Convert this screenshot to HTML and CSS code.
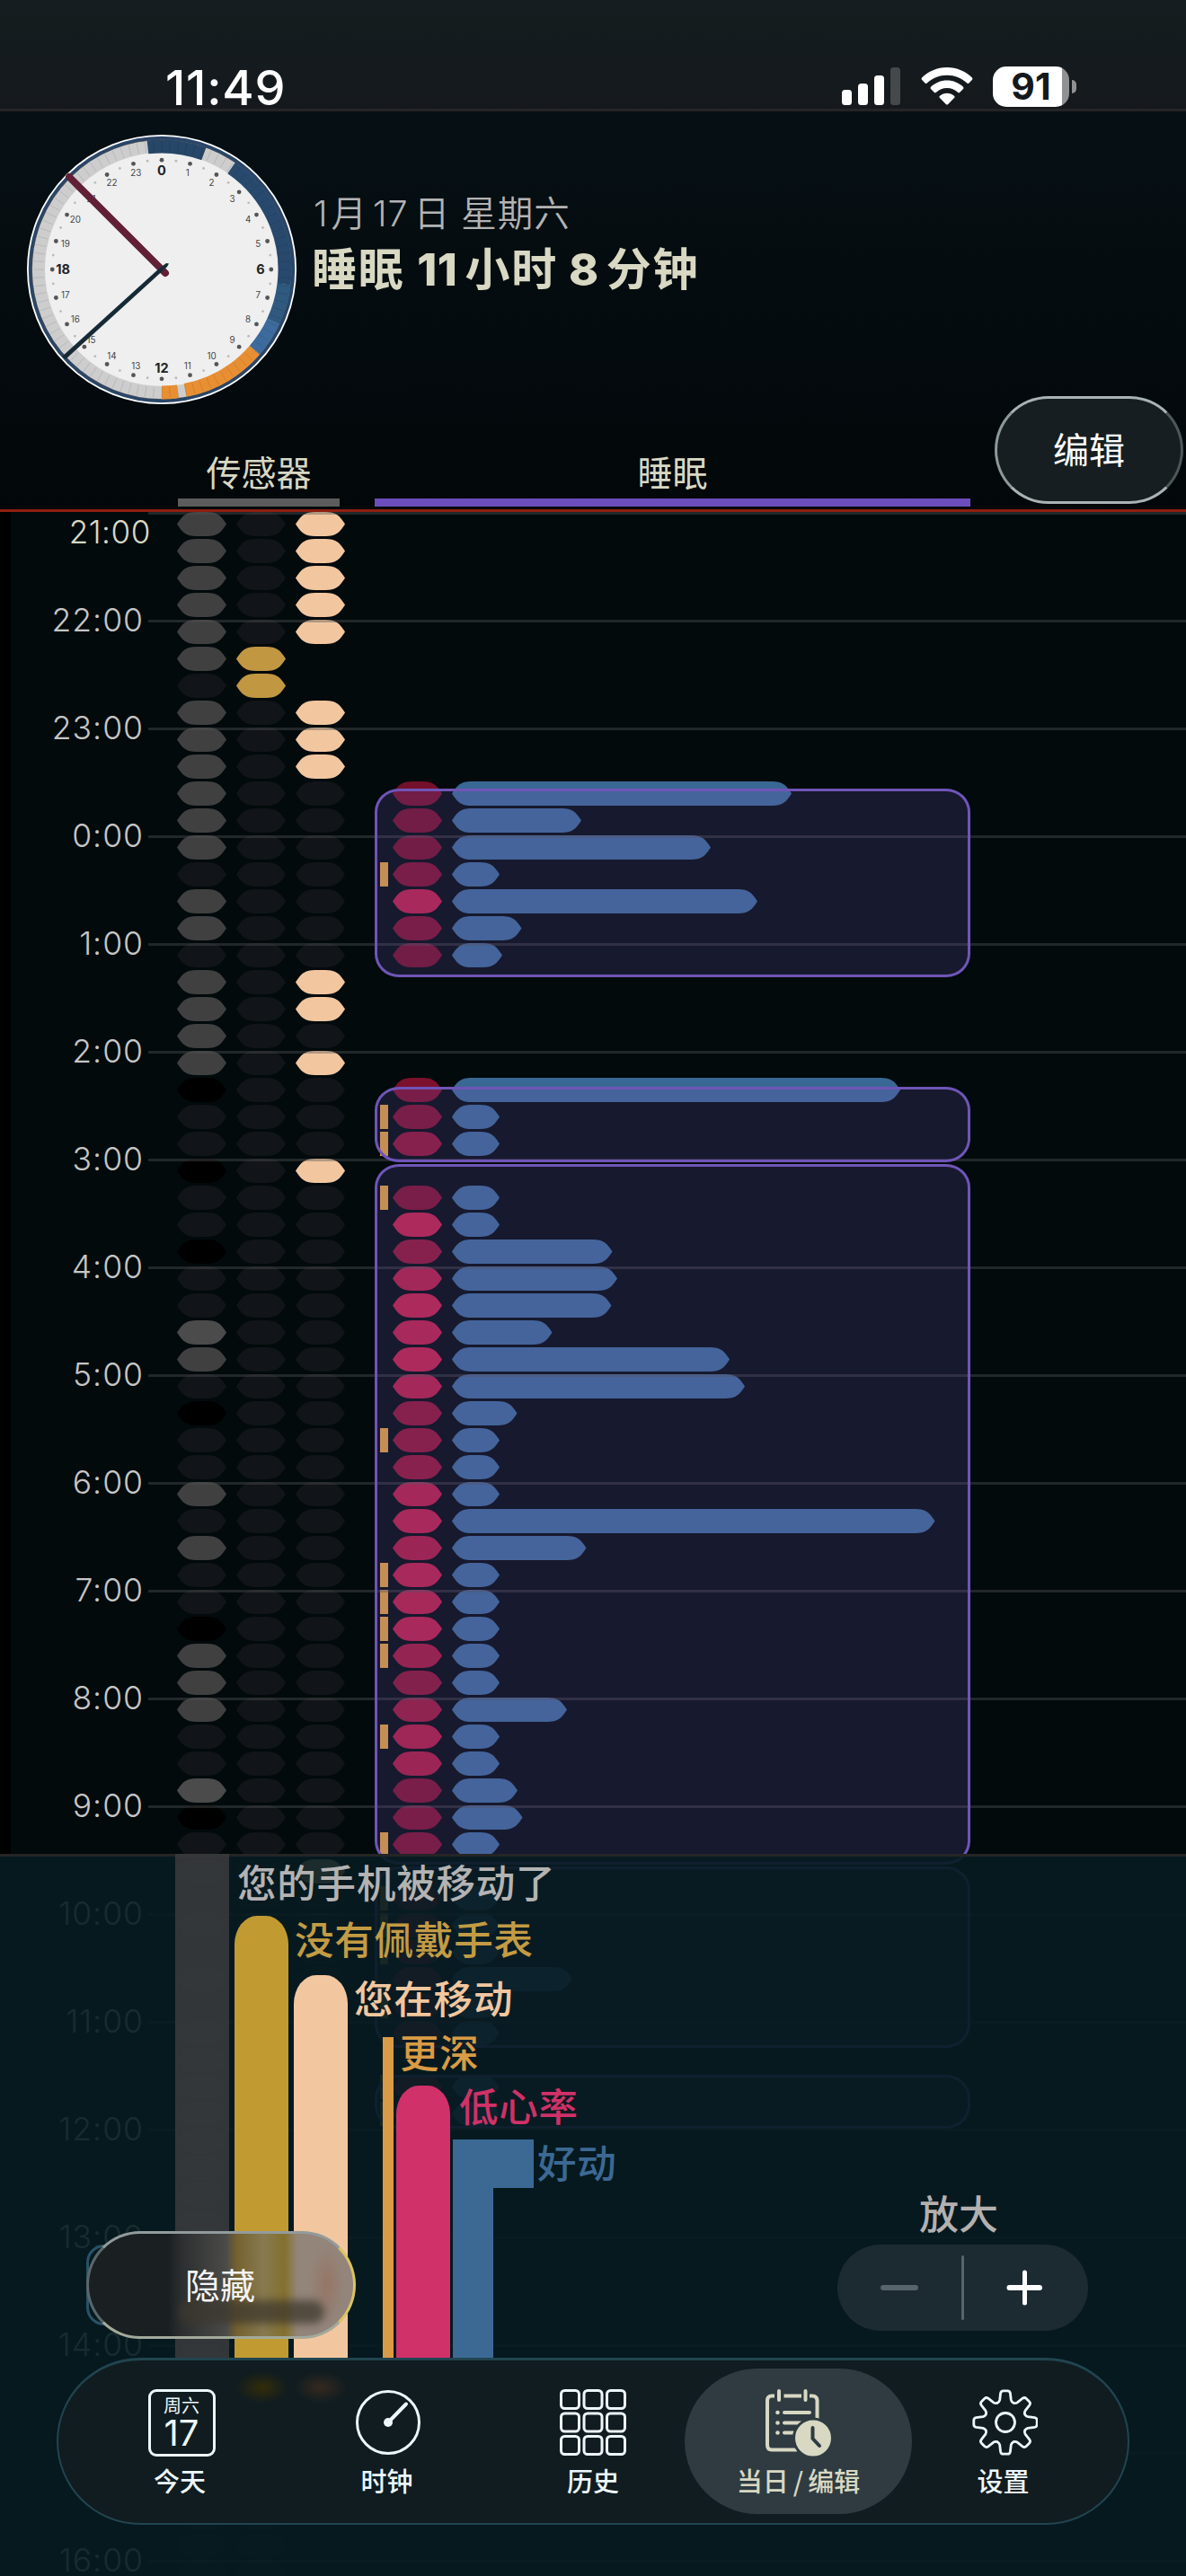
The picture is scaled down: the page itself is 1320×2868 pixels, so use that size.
FILE: index.html
```html
<!DOCTYPE html>
<html lang="zh-CN">
<head>
<meta charset="utf-8">
<title>睡眠</title>
<link rel="stylesheet" href="styles.css">
</head>
<body>
<div class="screen">
  <header class="status">
    <span class="time">11:49</span>
    <div class="status-icons">
      <svg class="signal" width="66" height="42" viewBox="0 0 66 42">
        <g fill="#fff"><rect x="0" y="25" width="11" height="17" rx="3.5"/><rect x="18" y="18" width="11" height="24" rx="3.5"/><rect x="36" y="9" width="11" height="33" rx="3.5"/></g>
        <rect x="54" y="0" width="11" height="42" rx="3.5" fill="#45494b"/>
      </svg>
      <svg class="wifi" width="58" height="42" viewBox="0 0 58 42" fill="#fff">
        <path d="M29 0C40 0 50 4.500 57 11.500Q58 12.700 57 13.800L53.500 17.400Q52.400 18.400 51.300 17.400C45 11.800 37.500 8.700 29 8.700S13 11.800 6.700 17.400Q5.600 18.400 4.500 17.400L1 13.800Q0 12.700 1 11.500C8 4.500 18 0 29 0Z"/>
        <path d="M29 14.500C36 14.500 42 17.200 47 21.700Q48.100 22.900 47 24L43.300 27.700Q42.200 28.700 41 27.700C37.700 24.700 33.700 23 29 23S20.300 24.700 17 27.700Q15.800 28.700 14.700 27.700L11 24Q9.900 22.900 11 21.700C16 17.200 22 14.500 29 14.500Z"/>
        <path d="M29 28.800C32 28.800 34.700 29.900 37 31.700Q38.200 32.900 37 34.100L30.200 41Q29 42.200 27.800 41L21 34.100Q19.800 32.900 21 31.700C23.300 29.900 26 28.800 29 28.800Z"/>
      </svg>
      <div class="battery"><b>91</b></div>
      <i class="battery-nub"></i>
    </div>
  </header>

  <section class="summary">
    <div class="summary-top">
      <svg id="clock" class="clock" width="300" height="300" viewBox="-150 -150 300 300"></svg>
      <div class="heading">
        <p class="date"><span class="d1">1</span>月<span class="d2">17</span>日 星期六</p>
        <h1 class="total">睡眠 <span class="n">11</span><span class="u">小时</span><span class="n">8</span><span class="u">分钟</span></h1>
      </div>
    </div>
    <div class="columns">
      <div class="column sensors">传感器</div>
      <div class="column sleep">睡眠</div>
    </div>
    <button class="glass edit">编辑</button>
  </section>

  <main class="chart" id="chart"></main>

  <section class="legend">
    <div class="pillars">
      <div class="pillar phone"><span>您的手机被移动了</span></div>
      <div class="pillar watch"><span>没有佩戴手表</span></div>
      <div class="pillar moving"><span>您在移动</span></div>
      <div class="pillar deeper"><span>更深</span></div>
      <div class="pillar heart"><span>低心率</span></div>
      <div class="pillar active"><span>好动</span></div>
    </div>
    <div class="zoom">
      <div class="zoom-title">放大</div>
      <div class="stepper">
        <svg width="279" height="96" viewBox="0 0 279 96" stroke-linecap="round" stroke-width="6">
          <path d="M51 48H87" stroke="#57646a"/>
          <path d="M139.500 13.500V82.500" stroke="#57646a" stroke-width="3"/>
          <path d="M191.500 48H225" stroke="#fff"/><path d="M208.500 31V65" stroke="#fff" stroke-width="5"/>
        </svg>
      </div>
    </div>
    <i class="hide-shadow"></i>
    <button class="glass hide"><i class="tint"></i><span>隐藏</span></button>
  </section>

  <nav class="tabs">
    <a class="tab today">
      <div class="cal"><small>周六</small><b>17</b></div>
      <span>今天</span>
    </a>
    <a class="tab">
      <svg width="76" height="76" viewBox="-39 -38 76 76" fill="none" stroke="#edf7fb" stroke-width="3"><circle r="34.500"/><path d="M0 0L20 -20.500" stroke-width="4" stroke-linecap="round"/><circle r="5" fill="#edf7fb" stroke="none"/></svg>
      <span>时钟</span>
    </a>
    <a class="tab">
      <svg width="76" height="76" viewBox="0 0 76 76" fill="none" stroke="#edf7fb" stroke-width="3">
        <rect x="2.500" y="2.500" width="20" height="20" rx="4"/><rect x="28" y="2.500" width="20" height="20" rx="4"/><rect x="53.500" y="2.500" width="20" height="20" rx="4"/>
        <rect x="2.500" y="28" width="20" height="20" rx="4"/><rect x="28" y="28" width="20" height="20" rx="4"/><rect x="53.500" y="28" width="20" height="20" rx="4"/>
        <rect x="2.500" y="53.500" width="20" height="20" rx="4"/><rect x="28" y="53.500" width="20" height="20" rx="4"/><rect x="53.500" y="53.500" width="20" height="20" rx="4"/>
      </svg>
      <span>历史</span>
    </a>
    <a class="tab selected">
      <svg width="76" height="76" viewBox="0 0 76 76" fill="none" stroke="#d8d8c3" stroke-width="4" stroke-linecap="round">
        <path d="M58.500 34V14Q58.500 8.500 53 8.500H50M41 8.500H21.500M11 8.500H8Q3 8.500 3 14V63Q3 68.500 8 68.500H36" stroke-linecap="butt"/>
        <path d="M16 3V13M45.500 3V13"/>
        <path d="M22 27H50M22 38.500H40M22 49.500H32"/>
        <g fill="#d8d8c3" stroke="none"><circle cx="14.500" cy="27" r="2.300"/><circle cx="14.500" cy="38.500" r="2.300"/><circle cx="14.500" cy="49.500" r="2.300"/></g>
        <circle cx="54" cy="55.500" r="21.500" fill="#d8d8c3" stroke="#2f3b41" stroke-width="3"/>
        <path d="M53.500 44V56L61 64" stroke="#2f3b41" stroke-linejoin="round"/>
      </svg>
      <span>当日<em>/</em>编辑</span>
    </a>
    <a class="tab">
      <svg width="76" height="76" viewBox="-40 -38 76 76" fill="none" stroke="#edf7fb" stroke-width="2.800" stroke-linecap="round">
        <defs><path id="tooth" d="M-9 -21.700Q-6.800 -22.600 -6.300 -25L-5.400 -32.500Q-5 -35.200 -2.300 -35.200H2.300Q5 -35.200 5.400 -32.500L6.300 -25Q6.800 -22.600 9 -21.700"/></defs>
        <use href="#tooth"/><use href="#tooth" transform="rotate(45)"/><use href="#tooth" transform="rotate(90)"/><use href="#tooth" transform="rotate(135)"/><use href="#tooth" transform="rotate(180)"/><use href="#tooth" transform="rotate(225)"/><use href="#tooth" transform="rotate(270)"/><use href="#tooth" transform="rotate(315)"/>
        <circle r="10.500"/>
      </svg>
      <span>设置</span>
    </a>
  </nav>
</div>
<script src="app.js"></script>
</body>
</html>
```
FILE: styles.css
```css
* { box-sizing: border-box; margin: 0; padding: 0; }
body { background: #020a0c; font-family: Inter, "Noto Sans CJK SC", sans-serif; }
i, em { font-style: normal; }
.screen { position: relative; width: 1320px; height: 2868px; overflow: hidden; display: flex; flex-direction: column; }

/* status bar */
.status { height: 124px; flex: none; display: flex; justify-content: space-between; padding: 74px 122px 0 184px; background: linear-gradient(#141d1f, #15191d); border-bottom: 3px solid #252525; color: #fff; }
.time { font-size: 54px; font-weight: 550; line-height: 48px; letter-spacing: .7px; }
.status-icons { display: flex; }
.signal { margin-top: 1px; margin-right: 22px; }
.wifi { margin-top: 1px; margin-right: 22px; }
.battery { width: 85px; height: 45px; border-radius: 15px; background: linear-gradient(90deg, #fff 77px, #8f9192 77px); color: #15191d; text-align: center; }
.battery b { font-size: 41px; line-height: 45px; }
.battery-nub { width: 5px; height: 15px; margin: 15px 0 0 3px; border-radius: 0 6px 6px 0; background: #8f9192; }

/* summary header */
.summary { position: relative; height: 446px; flex: none; display: flex; flex-direction: column; justify-content: space-between; background: linear-gradient(#061014, #03080b 85%, #020709); border-bottom: 3px solid #8e1f10; }
.summary-top { display: flex; padding: 26px 0 0 30px; }
.clock { flex: none; }
.heading { padding: 58px 0 0 17px; white-space: nowrap; }
.date { font-size: 39.500px; font-weight: 350; line-height: 60px; color: #b3b3b3; letter-spacing: 1px; padding-left: 2px; }
.date .d1 { margin-right: 3px; }
.date .d2 { margin: 0 6px 0 6px; }
.total { font-size: 50px; font-weight: 700; line-height: 60px; color: #d8d8c3; letter-spacing: 1.8px; padding-top: 2px; }
.total .n { font-weight: 800; letter-spacing: .5px; }
.total .u { margin: 0 8px; }
.total .u + .n { margin-left: 4px; }
.columns { display: flex; gap: 39px; padding: 0 0 3px 198px; }
.column { display: flex; justify-content: center; font-size: 39px; line-height: 56px; color: #d8d8c3; }
.sensors { width: 180px; border-bottom: 9px solid #5c5c5c; }
.sleep { width: 663px; border-bottom: 9px solid #6b4dbb; }
.glass { border: 3px solid #8d9899; border-radius: 60px; height: 120px; padding-bottom: 4px; font-family: "Noto Sans CJK SC", sans-serif; font-size: 40px; color: #fff; background: #161e21; }
.edit { position: absolute; right: 3px; top: 317px; width: 210px; border-color: #a9b3b5 #4d5759 #a9b3b5 #8d9899; }

/* timeline */
.chart { position: relative; flex: 1; border-left: 12px solid #000; background: #020a0c; overflow: hidden; }
.hour { position: relative; height: 120px; display: flex; }
.hour::after { content: ""; position: absolute; left: 153px; right: 0; top: 0; height: 3px; background: rgba(82,82,84,.4); }
.label { width: 148px; height: 34px; margin: -16px 37px 0 0; text-align: right; font-size: 35.500px; font-weight: 350; line-height: 34px; color: #c6c6c6; letter-spacing: 1px; }
.hour.pinned .label { width: 156px; margin: 5px 29px 0 0; font-size: 35px; letter-spacing: .6px; color: #d8d8c3; }
.slot { display: flex; height: 27px; margin-bottom: 3px; }
.slot svg { flex: none; display: block; }
.cell { width: 66px; flex: none; }
.mark { width: 9px; height: 27px; margin: 0 5px 0 28px; flex: none; }
.mark.on { background: #db9d3c; }
.night { position: absolute; left: 405px; width: 663px; border: 3px solid #6f55b8; border-radius: 27px / 26px; background: rgba(110,84,185,.2); }

/* legend panel */
.legend { position: absolute; left: 0; right: 0; top: 2064px; height: 804px; border-top: 3px solid #252525; background: rgba(7,27,33,.91); }
.pillars { position: absolute; left: 195px; top: -3px; height: 564px; display: flex; align-items: flex-end; }
.pillar { position: relative; width: 60px; margin-right: 6px; border-radius: 25px 25px 0 0 / 32px 32px 0 0; }
.pillar span { position: absolute; left: 68px; top: 0; font: 500 43.500px/60px "Noto Sans CJK SC", sans-serif; letter-spacing: .8px; white-space: nowrap; }
.phone { height: 564px; border-radius: 0; background: rgba(56,58,60,.9); color: #b3b3b3; }
.phone span { left: 69px; top: 1px; }
.watch { height: 495px; background: #c19a32; color: #c39b44; }
.watch span { left: 67px; top: -5px; }
.moving { height: 429px; margin-right: 39px; background: #f2c79f; color: #f2c79f; }
.moving span { left: 67px; top: -5px; }
.deeper { width: 12px; margin-right: 3px; height: 360px; border-radius: 0; background: #d99b45; color: #d99b45; }
.deeper span { left: 19px; top: -14px; }
.heart { height: 306px; margin-right: 3px; background: #d03168; color: #d03168; }
.heart span { left: 70px; top: -8px; }
.active { width: 90px; height: 246px; border-radius: 0; background: linear-gradient(#3b6994, #3b6994) 0 0 / 90px 54px no-repeat, linear-gradient(#3b6994, #3b6994) 0 0 / 45px 100% no-repeat; color: #3b6994; }
.active span { left: 94px; top: -5px; }
.zoom { position: absolute; left: 932px; top: 363px; width: 279px; }
.zoom-title { height: 69px; text-align: center; padding-right: 9px; font: 500 44px/66px "Noto Sans CJK SC", sans-serif; color: #b3b0b0; }
.stepper { height: 96px; border-radius: 48px; background: #1c2b31; }
.stepper svg { display: block; }
.hide { position: absolute; left: 96px; top: 417px; width: 300px; overflow: hidden; font-size: 39px; color: #f4f4f4; border-color: #929b9c #d9c463 #a3a99b #59676b; padding-right: 2px; background: radial-gradient(ellipse 20px 46px at 90% 50%, rgba(150,112,92,.7), transparent), linear-gradient(90deg, #1a2022 30%, #2c2f30 35%, #4b4b49 52%, #75622f 56%, #877a50 66%, #84702e 74%, #94857a 79%, #93857c); }
.hide span { position: relative; }
.tint { position: absolute; left: 100px; top: 74px; width: 162px; height: 26px; border-radius: 13px; background: rgba(62,56,46,.75); filter: blur(5px); }
.hide-shadow { position: absolute; left: 96px; top: 432px; width: 80px; height: 90px; border: 3px solid #285268; border-radius: 20px; }

/* tab bar */
.tabs { position: absolute; left: 63px; top: 2625px; width: 1194px; height: 186px; padding: 12px 11px; display: flex; border: 2px solid #214450; border-top-width: 3px; border-radius: 93px; color: #edf7fb; background: radial-gradient(ellipse 30px 18px at 227px 30px, #332c08, transparent), radial-gradient(ellipse 30px 18px at 292px 30px, #35291f, transparent), #101c20; }
.tab { flex: none; display: flex; flex-direction: column; align-items: center; padding-top: 19px; font: 500 29px/42px "Noto Sans CJK SC", sans-serif; border-radius: 81px; }
.tab svg { display: block; flex: none; }
.tab > span { margin-top: 5px; white-space: nowrap; }
.tab:first-child { width: 248px; }
.tab:nth-child(2) { width: 213px; }
.tab:nth-child(3) { width: 246px; margin-right: -21px; }
.tab.selected { width: 253px; height: 162px; margin-top: -3px; padding-top: 22px; background: #2f3b41; color: #d8d8c3; }
.tab:last-child { width: 203px; }
.tab em { margin: 0 5px; }
.cal { width: 75px; height: 75px; margin: 1px 0 0 4px; border: 3px solid #edf7fb; border-radius: 9px; display: flex; flex-direction: column; align-items: center; flex: none; }
.cal small { height: 29px; font-size: 20px; font-weight: 400; line-height: 29px; }
.cal b { height: 34px; font: 400 40px/34px Inter, sans-serif; }
```
FILE: app.js
```js
// Timeline slots of 15 minutes, four per hour.
// Format: phone, watch, motion, marker, heart intensity, activity width.
// phone: g gray, l light, k black, d dim; motion: p moving; "-" empty.
const slots = [
  'gdp','gdp','gdp','gdp',
  'gdp','gY-','dY-','gdp',
  'gdp','gdp','gdd .0 378','gdd .0 144',
  'gdd .0 288','dddm .12 53','gdd .92 340','gdd .12 77.5',
  'ddd .0 56','gdp','gdp','gdd',
  'gdp','kdd .12 499','dddm .12 53','dddm .35 53',
  'kdp','dddm .12 53','ddd 1 53','kdd .35 178.5',
  'ddd .82 184','ddd 1 177.5','ldd .92 111.5','gdd 1 309',
  'ddd .85 326','kdd .35 72.5','dddm .35 53','ddd .37 53',
  'gdd .85 53','ddd .92 537.5','gdd .7 149.5','dddm .92 53',
  'dddm .88 53','kddm .92 53','gddm .58 53','gdd .3 53',
  'gdd .5 128','dddm .75 53','ddd .7 53','ldd .12 73',
  'kdd .12 78.5','dddm .12 53','gdp','dddm .3 53',
  'gddm .6 53','dddm .6 53','gdd .6 134','dddm .6 53',
  'gdd .6 53','gdd','gddm .6 53','gddm .6 53',
  'gdd','gdd','gdd','gdd','gdp','gdp','gdd','gdd',
  'gdd','gdd','dd-','dd-','dd-','dd-','dd-','dd-','dd-','dd-','dd-','dd-'
];
const colors = { g: '#404040', l: '#4b4b4b', k: '#000', d: '#111418', Y: '#c19742', p: '#f2c79f' };

function pill(w, color) {
  if (!color) return '';
  return `<svg width="${w}" height="27" viewBox="0 0 ${w} 27"><path fill="${color}" d="M0 13.500C6 4 10 0 22 0H${w - 22}C${w - 10} 0 ${w - 6} 4 ${w} 13.500C${w - 6} 23 ${w - 10} 27 ${w - 22} 27H22C10 27 6 23 0 13.500Z"/></svg>`;
}
function slot(spec) {
  const [kinds, heat, bar] = spec.split(' ');
  let html = '';
  for (const k of kinds.slice(0, 3)) html += `<div class="cell">${pill(55, colors[k])}</div>`;
  html += `<div class="mark${kinds[3] ? ' on' : ''}"></div>`;
  if (bar) {
    const t = +heat;
    const c = `rgb(${116 + 73 * t | 0},${16 + 16 * t | 0},${42 + 29 * t | 0})`;
    html += `<div class="cell">${pill(55, c)}</div>${pill(+bar, '#3a6894')}`;
  }
  return `<div class="slot">${html}</div>`;
}
let html = '';
for (let i = 0; i * 4 < slots.length; i++) {
  html += `<div class="hour${i ? '' : ' pinned'}"><div class="label">${(21 + i) % 24}:00</div><div>${slots.slice(i * 4, i * 4 + 4).map(slot).join('')}</div></div>`;
}
for (const [top, bottom] of [[308, 518], [640, 724], [726, 1506], [1508, 1710], [1740, 1800]]) {
  html += `<div class="night" style="top:${top}px;height:${bottom - top}px"></div>`;
}
document.getElementById('chart').innerHTML = html;

// 24-hour clock face: midnight at the top.
const pt = (r, deg) => [r * Math.sin(deg * Math.PI / 180), -r * Math.cos(deg * Math.PI / 180)].map(v => v.toFixed(2));
const arc = (a, b, c) => `<path d="M${pt(137, a)}A137 137 0 ${b - a > 180 ? 1 : 0} 1 ${pt(137, b)}" fill="none" stroke="${c}" stroke-width="15"/>`;
let face = '<circle r="149" fill="#efefef" stroke="#fff" stroke-width="2"/><circle r="146.200" fill="none" stroke="#2a4668" stroke-width="4"/><circle r="144.200" fill="none" stroke="#504f50" stroke-width="1"/><circle r="137" fill="none" stroke="#cdcdcd" stroke-width="14"/>';
face += arc(-6.500, 20, '#264767') + arc(34.500, 97, '#28496e') + arc(96.900, 115, '#2f597f') + arc(114.900, 131, '#3e6b9d') + arc(131, 169, '#e88f33') + arc(172.500, 180, '#e88f33');
for (let a = 0; a < 360; a += 3.75) {
  face += `<path d="M${pt(131, a)}L${pt(143, a)}" stroke="#000" stroke-opacity=".14" stroke-width=".7"/>`;
}
for (let h = 0; h < 24; h++) {
  const a = h * 15, [x, y] = pt(121.8, a), [hx, hy] = pt(121.8, a + 7.5), big = h % 6 === 0;
  const [tx, ty] = pt(big ? 110 : 111, a);
  face += `<circle cx="${x}" cy="${y}" r="2.400" fill="#555"/><circle cx="${hx}" cy="${hy}" r="1.400" fill="#bbb"/>`;
  face += `<text x="${tx}" y="${+ty + (big ? 5.2 : 3.5)}" text-anchor="middle" font-size="${big ? 14.5 : 9.8}" font-weight="${big ? 700 : 400}" fill="${big ? '#222' : '#444'}">${h}</text>`;
}
face += '<path d="M4 4L-103 -103" stroke="#612035" stroke-width="8" stroke-linecap="round"/>';
face += '<path d="M8 -6.500L6 -3L-107 100L-111 97L-3 -1L5 -7Z" fill="#162a36"/>';
document.getElementById('clock').innerHTML = face;
```
